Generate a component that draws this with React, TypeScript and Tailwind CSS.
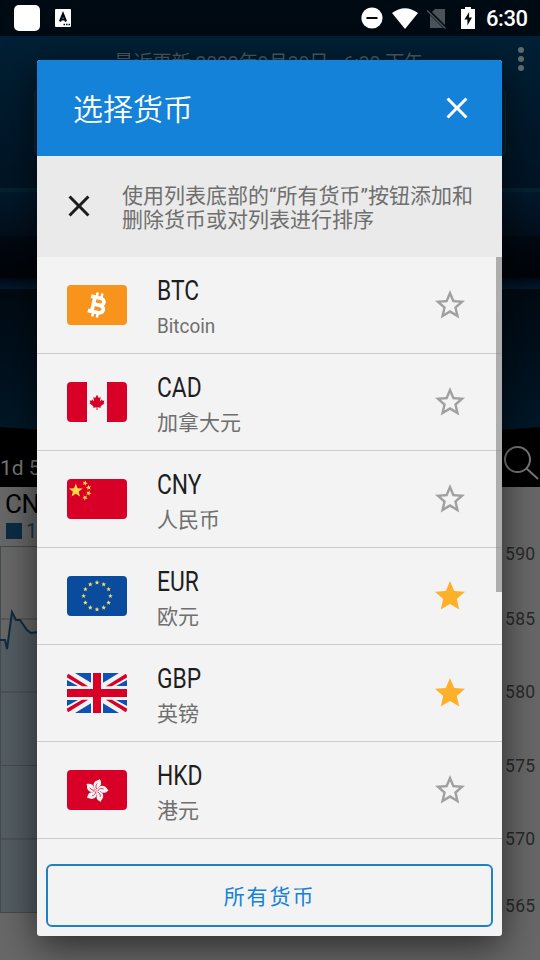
import React, { useState } from 'react';

const starPath =
  'M12 17.27L18.18 21l-1.64-7.03L22 9.24l-7.19-.61L12 2 9.19 8.63 2 9.24l5.46 4.73L5.82 21z';
const starOutlinePath =
  'M22 9.24l-7.19-.62L12 2 9.19 8.63 2 9.24l5.46 4.73L5.82 21 12 17.27 18.18 21l-1.63-7.03L22 9.24zM12 15.4l-3.76 2.27 1-4.28-3.32-2.88 4.38-.38L12 6.1l1.71 4.04 4.38.38-3.32 2.88 1 4.28L12 15.4z';
const closePath =
  'M19 6.41L17.59 5 12 10.59 6.41 5 5 6.41 10.59 12 5 17.59 6.41 19 12 13.41 17.59 19 19 17.59 13.41 12z';

// points of a five pointed star around cx, cy
const star = (cx: number, cy: number, r: number, turn = 0) =>
  Array.from({ length: 10 }, (_, i) => {
    const a = ((i * 36 - 90 + turn) * Math.PI) / 180;
    const d = i % 2 ? r * 0.42 : r;
    return `${(cx + d * Math.cos(a)).toFixed(2)},${(cy + d * Math.sin(a)).toFixed(2)}`;
  }).join(' ');

function Flag({ code }: { code: string }) {
  return (
    <svg viewBox="0 0 60 40" className="block h-10 w-[60px] shrink-0 rounded-[4px]">
      {code === 'BTC' && (
        <>
          <rect width="60" height="40" fill="#f8931c" />
          <g transform="translate(30.3 20) rotate(13)" fill="none" stroke="#fff">
            <path d="M-8 -7.3H1.6C7.4 -7.3 7.2 -0.3 1.8 -0.3H-3.4M1.8 -0.3C8.8 -0.3 8.4 7.4 1.8 7.4H-8M-4 -7.3V7.5" strokeWidth="3.7" />
            <path d="M-2.4 -12.3V-7M2.4 -12.3V-7M-2.4 7V12.3M2.4 7V12.3" strokeWidth="2.5" />
          </g>
        </>
      )}
      {code === 'CAD' && (
        <>
          <rect width="60" height="40" fill="#f3f3f3" />
          <path d="M0 0h20v40H0zM40 0h20v40H40z" fill="#d80027" />
          <path
            d="M30 12.8l1.8 3.2 1.9-.9-.8 4.3 2-1.9.5 1.2 2-.3-.7 2 .8.9-3.9 3 .4 1.5-3.6-.5.1 2.7h-1l.1-2.7-3.6.5.4-1.5-3.9-3 .8-.9-.7-2 2 .3.5-1.2 2 1.9-.8-4.3 1.9.9z"
            fill="#d80027"
          />
        </>
      )}
      {code === 'CNY' && (
        <>
          <rect width="60" height="40" fill="#d80027" />
          <g fill="#ffda44">
            <polygon points={star(8.8, 11.7, 7.2)} />
            <polygon points={star(18, 4.2, 2.9, 20)} />
            <polygon points={star(21.6, 8.6, 2.9, -10)} />
            <polygon points={star(21.6, 14.2, 2.9, 20)} />
            <polygon points={star(18, 18.6, 2.9, 40)} />
          </g>
        </>
      )}
      {code === 'EUR' && (
        <>
          <rect width="60" height="40" fill="#0a4b9e" />
          <g fill="#f5e063">
            {Array.from({ length: 12 }, (_, i) => (
              <polygon
                key={i}
                points={star(
                  30 + 13.4 * Math.sin((i * Math.PI) / 6),
                  20 - 13.4 * Math.cos((i * Math.PI) / 6),
                  2.5,
                )}
              />
            ))}
          </g>
        </>
      )}
      {code === 'GBP' && (
        <>
          <rect width="60" height="40" fill="#f3f3f3" />
          <path
            d="M8 0H24V9.800zM52 0H36V9.800zM0 7V13H11zM60 7V13H49zM8 40H24V30.200zM52 40H36V30.200zM0 33V27H11zM60 33V27H49z"
            fill="#0d52b4"
          />
          <path
            d="M0 1V4.500L15.500 13.500H21.500L1.500 1zM60 1V4.500L44.500 13.500H38.500L58.500 1zM0 39V35.500L15.500 26.500H21.500L1.500 39zM60 39V35.500L44.500 26.500H38.500L58.500 39z"
            fill="#d80027"
          />
          <path d="M24 0h12v40H24zM0 13.500h60v13H0z" fill="#f3f3f3" />
          <path d="M26 0h8v16h26v8H34v16h-8V24H0v-8h26z" fill="#d80027" />
        </>
      )}
      {code === 'HKD' && (
        <>
          <rect width="60" height="40" fill="#d80027" />
          {[8, 80, 152, 224, 296].map((a) => (
            <g key={a} transform={`translate(29.6 20.6) rotate(${a})`}>
              <path
                d="M0 0C-3.8 -2.4 -5 -6.200 -2.600 -9C-1.200 -10.600 .8 -10.400 1.400 -12C4.400 -8.800 3.800 -5.400 1.700 -4C.8 -2.800 .3 -1.400 0 0z"
                fill="#f3f3f3"
              />
              <path d="M0 -1.500C-1.700 -3.300 -1.500 -5.300 -.4 -7.200" fill="none" stroke="#d80027" strokeWidth=".7" />
            </g>
          ))}
        </>
      )}
    </svg>
  );
}

const currencies = [
  { code: 'BTC', name: 'Bitcoin' },
  { code: 'CAD', name: '加拿大元' },
  { code: 'CNY', name: '人民币' },
  { code: 'EUR', name: '欧元' },
  { code: 'GBP', name: '英镑' },
  { code: 'HKD', name: '港元' },
];

function StatusBar() {
  return (
    <div className="flex h-9 items-center bg-[#000a12] pr-[13px] pl-3.5 text-white">
      <div className="h-[26px] w-[26px] rounded-[5px] bg-white" />
      <svg viewBox="0 0 16 18" className="ml-[15px] h-[18px] w-4">
        <rect width="16" height="18" rx="1" fill="#fff" />
        <path d="M5 12.500L8 5L11 12.500M6 10.500H10" fill="none" stroke="#000a12" strokeWidth="2.200" />
        <path d="M8.500 15.500h1.500M11 15.500h1.500M13.500 15.500h1.500" stroke="#000a12" strokeWidth="1.300" />
      </svg>
      <div className="flex-1" />
      <svg viewBox="0 0 22 22" className="h-[22px] w-[22px]">
        <circle cx="11" cy="11" r="10.6" fill="#fff" />
        <path d="M5.5 11h11" stroke="#000a12" strokeWidth="2" />
      </svg>
      <svg viewBox="0 0 26 21" className="ml-[9px] h-[21px] w-[26px]">
        <path d="M0 5Q13 -4.5 26 5L13 21z" fill="#fff" />
      </svg>
      <svg viewBox="0 0 20 21" className="ml-[9px] h-[21px] w-5">
        <path d="M8 1H18V20H3V6z" fill="#4b5359" />
        <path d="M0 1.5L19 20.5" stroke="#000a12" strokeWidth="3.500" />
        <path d="M0 2.5L18.5 20.5" stroke="#4b5359" strokeWidth="1.6" />
      </svg>
      <svg viewBox="0 0 14 22" className="ml-[14px] h-[22px] w-3.5">
        <path d="M4 0h6v2h4v20H0V2h4z" fill="#fff" />
        <path d="M8.2 5L3.4 12.4H6.4V18.5L11 10.6H8z" fill="#000a12" />
      </svg>
      <span className="ml-[11px] w-[41px] text-[22px] font-medium tracking-[-0.4px] whitespace-nowrap">6:30</span>
    </div>
  );
}

function Converter() {
  return (
    <div className="flex h-[451px] flex-col overflow-hidden bg-black">
      <div className="h-[152px] shrink-0 bg-linear-to-b from-[#002035] to-[#001424]">
        <div className="flex h-[52px] pt-2.5">
          <p className="ml-[114px] h-8 flex-1 text-[19.200px] leading-[33px] whitespace-nowrap text-[#4c5a64]">
            最近更新 2022年9月30日 - 6:30 下午
          </p>
          <div className="mr-4 flex flex-col gap-[3px] pt-px">
            <i className="h-[6px] w-[6px] rounded-full bg-[#616a70]" />
            <i className="h-[6px] w-[6px] rounded-full bg-[#616a70]" />
            <i className="h-[6px] w-[6px] rounded-full bg-[#616a70]" />
          </div>
        </div>
        <div className="mx-[34px] h-[68px] rounded-md border border-[#0d2b3a] bg-[#02202f]" />
      </div>
      <div className="h-12 shrink-0 border-t-4 border-[#04222f] bg-linear-to-b from-[#02192d] to-[#030e1a]" />
      <div className="h-[42px] shrink-0 bg-linear-to-b from-[#000912] to-[#000409]" />
      <div className="h-[11px] shrink-0 bg-linear-to-b from-[#000a14] to-[#001a2f]" />
      <div className="h-[144px] shrink-0 bg-linear-to-b from-[#000a12] via-[#00101d] to-[#001827]" />
      <svg viewBox="0 0 540 12" className="-mt-1.5 h-3 w-full shrink-0">
        <path d="M0 0Q270 22 540 0V12H0z" fill="#000" />
      </svg>
      <div className="flex flex-1 items-start justify-between pt-[5px] text-[#777]">
        <span className="pt-2 text-[21px] leading-8">1d 5d</span>
        <svg viewBox="0 0 38 38" className="h-[38px] w-[38px]" fill="none" stroke="#777" strokeWidth="2">
          <circle cx="15.500" cy="15.500" r="12.500" />
          <path d="M24.500 24.500L36 35" />
        </svg>
      </div>
    </div>
  );
}

function Chart() {
  return (
    <div className="flex h-[473px] flex-col bg-[#686868] text-[#2a2a2a]">
      <div className="h-[59px] pl-[5px]">
        <p className="text-[26px] leading-[34px] tracking-[-.5px] text-black">CNY/JPY</p>
        <p className="flex items-center gap-1 pl-px text-[20px] leading-[20px] text-[#173347]">
          <i className="h-4 w-4 bg-[#0b2c45]" />1d
        </p>
      </div>
      <div className="flex">
        <svg viewBox="0 0 502 368" className="h-[368px] w-[502px]">
          <path d="M0 94H5L7 103L12 66L16 74H20L27 84L31 87L38 86H502V367H0z" fill="#545d63" />
          <path d="M.5 0V367M0 .5H502M0 73H502M0 146H502M0 219.500H502M0 293H502M0 366.500H502" stroke="#454a4e" />
          <path d="M0 94H5L7 103L12 66L16 74H20L27 84L31 87L38 86" fill="none" stroke="#102c42" strokeWidth="2" />
        </svg>
        <div className="flex flex-1 flex-col pl-[3px] text-[17.500px] leading-[26px] tracking-[.3px]">
          <span className="-mt-[5px] h-[65px]">590</span>
          {[585, 580, 575].map((n) => (
            <span key={n} className="h-[73.300px]">{n}</span>
          ))}
          <span className="h-[67.500px]">570</span>
          <span>565</span>
        </div>
      </div>
    </div>
  );
}

function App() {
  const [favourites, setFavourites] = useState<string[]>(['EUR', 'GBP']);

  const toggle = (code: string) => {
    setFavourites((f) => (f.includes(code) ? f.filter((c) => c !== code) : [...f, code]));
  };

  return (
    <div className="relative h-[960px] w-[540px] overflow-hidden font-[Roboto,'Noto_Sans_CJK_SC',sans-serif]">
      <StatusBar />
      <Converter />
      <Chart />

      {/* dialog */}
      <div className="absolute top-[60px] left-[37px] flex h-[876px] w-[465px] flex-col overflow-hidden rounded-[3px] bg-[#f3f3f3] shadow-[0_10px_38px_rgba(0,0,0,0.6)]">
        <div className="flex h-24 shrink-0 items-center justify-between bg-[#1482d8] pr-[27px] pl-9 text-white">
          <h1 className="pb-0.5 font-['Noto_Sans_CJK_SC',sans-serif] text-[30px] font-[350]">选择货币</h1>
          <svg viewBox="0 0 24 24" className="h-9 w-9 fill-white">
            <path d={closePath} />
          </svg>
        </div>
        <div className="flex h-[101px] shrink-0 items-center bg-[#eaeaea] pl-6">
          <svg viewBox="0 0 24 24" className="-mt-px h-9 w-9 fill-[#1c1c1c]">
            <path d={closePath} />
          </svg>
          <p className="ml-[25px] pt-[3px] text-[21px] leading-6 whitespace-nowrap text-[#6f6f6f]">
            使用列表底部的“所有货币”按钮添加和
            <br />
            删除货币或对列表进行排序
          </p>
        </div>

        <div className="relative">
          {currencies.map(({ code, name }) => (
            <div key={code} className="flex h-[97px] items-center border-b border-[#cbcbcb] pr-[34px] pl-[30px]">
              <Flag code={code} />
              <div className="ml-[30px] flex-1 pt-[7px]">
                <p className="origin-left scale-x-[.845] text-[27px] leading-9 text-[#1e1e1e]">{code}</p>
                {code === 'BTC' ? (
                  <p className="origin-left scale-x-[.9] text-[21px] leading-[35px] text-[#6f6f6f]">{name}</p>
                ) : (
                  <p className="text-[21px] leading-[35px] text-[#6f6f6f]">{name}</p>
                )}
              </div>
              <button onClick={() => toggle(code)}>
                {favourites.includes(code) ? (
                  <svg viewBox="0 0 24 24" className="h-9 w-9 fill-[#ffb02a]">
                    <path d={starPath} />
                  </svg>
                ) : (
                  <svg viewBox="0 0 24 24" className="h-9 w-9 fill-[#a0a0a0]">
                    <path d={starOutlinePath} />
                  </svg>
                )}
              </button>
            </div>
          ))}
          <div className="absolute top-0 right-0 h-[335px] w-1.5 bg-[#7f7f7f]/60" />
        </div>

        <div className="flex-1" />
        <button className="mx-[9px] mb-[9px] h-[63px] rounded-md border-2 border-[#2080c6] pt-1 text-[21px] tracking-[1.900px] text-[#1482d8]">
          所有货币
        </button>
      </div>
    </div>
  );
}

export default App;
